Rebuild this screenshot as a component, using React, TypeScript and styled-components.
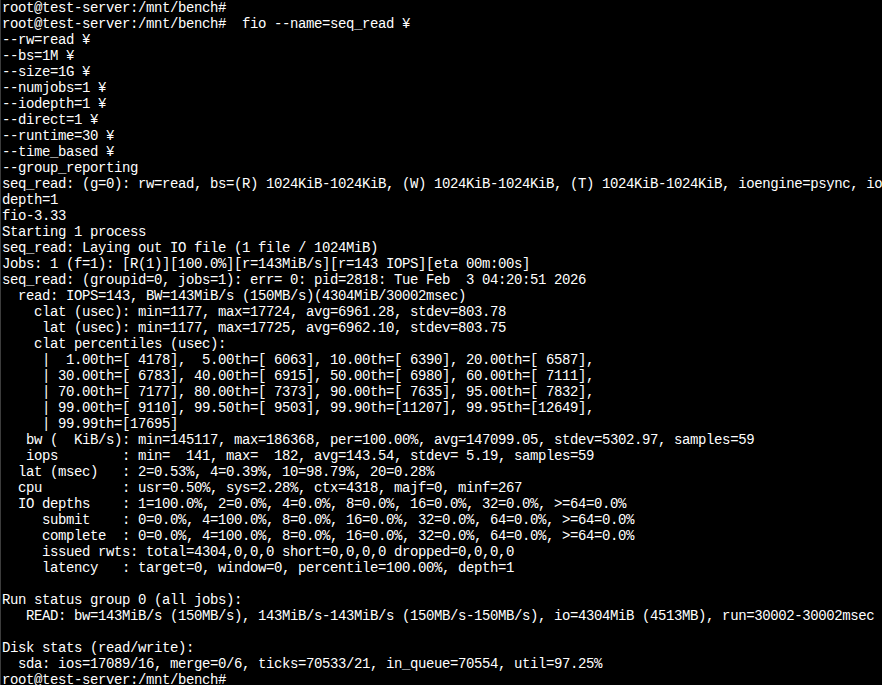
import React from "react";
import styled, { createGlobalStyle } from "styled-components";

const Global = createGlobalStyle`
  html, body {
    margin: 0;
    padding: 0;
    background: #000;
    overflow: hidden;
  }
`;

const Screen = styled.div`
  width: 882px;
  height: 685px;
  box-sizing: border-box;
  background: #000;
  border-left: 1px solid #3c3c3c;
  padding-left: 1px;
  overflow: hidden;
  display: flex;
  flex-direction: column;
`;

const Line = styled.div`
  height: 16px;
  line-height: 16px;
  flex: none;
  white-space: pre;
  font-family: "Liberation Mono", "DejaVu Sans Mono", monospace;
  font-size: 14px;
  letter-spacing: -0.4px;
  color: #ffffff;
`;

const lines: string[] = [
  "root@test-server:/mnt/bench#",
  "root@test-server:/mnt/bench#  fio --name=seq_read ¥",
  "--rw=read ¥",
  "--bs=1M ¥",
  "--size=1G ¥",
  "--numjobs=1 ¥",
  "--iodepth=1 ¥",
  "--direct=1 ¥",
  "--runtime=30 ¥",
  "--time_based ¥",
  "--group_reporting",
  "seq_read: (g=0): rw=read, bs=(R) 1024KiB-1024KiB, (W) 1024KiB-1024KiB, (T) 1024KiB-1024KiB, ioengine=psync, io",
  "depth=1",
  "fio-3.33",
  "Starting 1 process",
  "seq_read: Laying out IO file (1 file / 1024MiB)",
  "Jobs: 1 (f=1): [R(1)][100.0%][r=143MiB/s][r=143 IOPS][eta 00m:00s]",
  "seq_read: (groupid=0, jobs=1): err= 0: pid=2818: Tue Feb  3 04:20:51 2026",
  "  read: IOPS=143, BW=143MiB/s (150MB/s)(4304MiB/30002msec)",
  "    clat (usec): min=1177, max=17724, avg=6961.28, stdev=803.78",
  "     lat (usec): min=1177, max=17725, avg=6962.10, stdev=803.75",
  "    clat percentiles (usec):",
  "     |  1.00th=[ 4178],  5.00th=[ 6063], 10.00th=[ 6390], 20.00th=[ 6587],",
  "     | 30.00th=[ 6783], 40.00th=[ 6915], 50.00th=[ 6980], 60.00th=[ 7111],",
  "     | 70.00th=[ 7177], 80.00th=[ 7373], 90.00th=[ 7635], 95.00th=[ 7832],",
  "     | 99.00th=[ 9110], 99.50th=[ 9503], 99.90th=[11207], 99.95th=[12649],",
  "     | 99.99th=[17695]",
  "   bw (  KiB/s): min=145117, max=186368, per=100.00%, avg=147099.05, stdev=5302.97, samples=59",
  "   iops        : min=  141, max=  182, avg=143.54, stdev= 5.19, samples=59",
  "  lat (msec)   : 2=0.53%, 4=0.39%, 10=98.79%, 20=0.28%",
  "  cpu          : usr=0.50%, sys=2.28%, ctx=4318, majf=0, minf=267",
  "  IO depths    : 1=100.0%, 2=0.0%, 4=0.0%, 8=0.0%, 16=0.0%, 32=0.0%, >=64=0.0%",
  "     submit    : 0=0.0%, 4=100.0%, 8=0.0%, 16=0.0%, 32=0.0%, 64=0.0%, >=64=0.0%",
  "     complete  : 0=0.0%, 4=100.0%, 8=0.0%, 16=0.0%, 32=0.0%, 64=0.0%, >=64=0.0%",
  "     issued rwts: total=4304,0,0,0 short=0,0,0,0 dropped=0,0,0,0",
  "     latency   : target=0, window=0, percentile=100.00%, depth=1",
  "",
  "Run status group 0 (all jobs):",
  "   READ: bw=143MiB/s (150MB/s), 143MiB/s-143MiB/s (150MB/s-150MB/s), io=4304MiB (4513MB), run=30002-30002msec",
  "",
  "Disk stats (read/write):",
  "  sda: ios=17089/16, merge=0/6, ticks=70533/21, in_queue=70554, util=97.25%",
  "root@test-server:/mnt/bench#",
];

export default function App() {
  return (
    <>
      <Global />
      <Screen>
        {lines.map((text, i) => (
          <Line key={i}>{text}</Line>
        ))}
      </Screen>
    </>
  );
}
